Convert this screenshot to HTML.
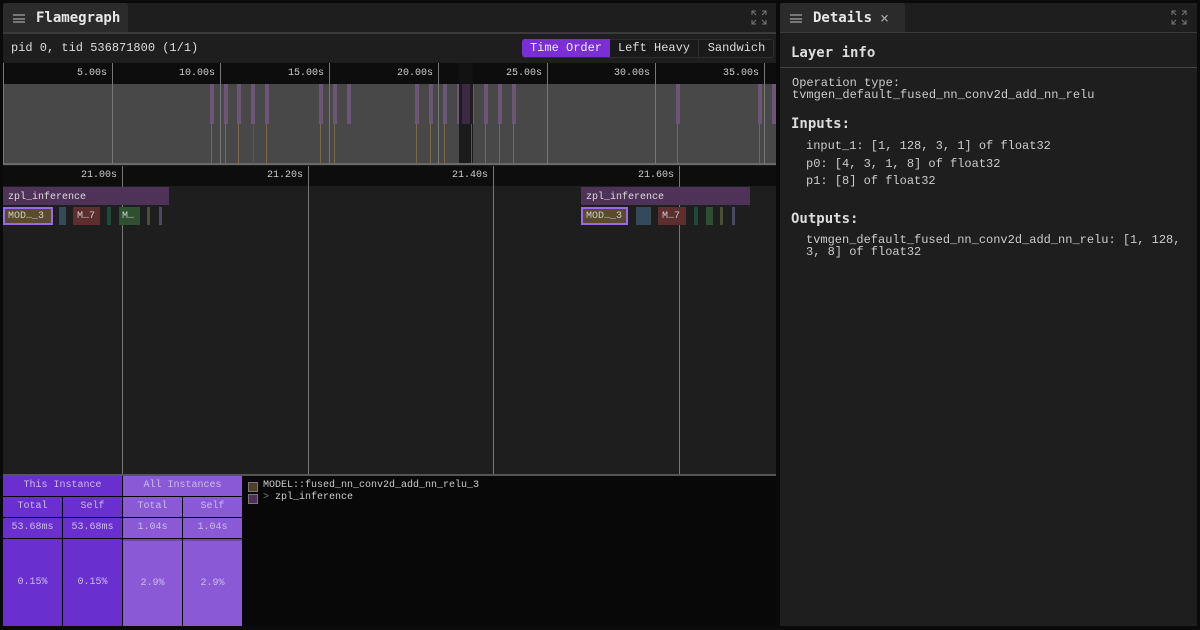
<!DOCTYPE html>
<html><head><meta charset="utf-8"><style>
*{margin:0;padding:0;box-sizing:border-box}
body{width:1200px;height:630px;background:#0a0a0a;font-family:"Liberation Mono","DejaVu Sans Mono",monospace;color:#d4d4d4;position:relative;overflow:hidden}
.a{position:absolute}
.panel{background:#1e1e1e}
.tab{background:#2b2b2b;height:30px;border-radius:3px 3px 0 0;font:bold 14px "DejaVu Sans Mono","Liberation Mono",monospace;color:#e8e8e8;line-height:30px}
.ham{position:absolute;left:10px;top:11px;width:12px;height:9px;border-top:2px solid #777;border-bottom:2px solid #777}
.ham:after{content:"";position:absolute;left:0;top:1.5px;width:12px;height:2px;background:#777}
.t{font-size:10px;color:#ccc;position:absolute}
.vl{position:absolute;width:1px;background:#777}
.st{position:absolute;width:4px;top:84px;height:40px;background:#6d5577}
.st2{position:absolute;width:1px;top:124px;height:40px;background:#7a6a4a}
.cell{position:absolute;font-size:10px;text-align:center;color:#cbbce8}
</style></head><body>
<div class="a panel" style="left:3px;top:3px;width:773px;height:623px"></div>
<div class="a tab" style="left:3px;top:3px;width:125px"><div class="ham"></div><span style="position:absolute;left:33px">Flamegraph</span></div>
<div class="a" style="left:3px;top:32px;width:773px;height:2px;background:#3a3a3a"></div>
<svg class="a" style="left:751px;top:10px" width="16" height="15" fill="none" stroke="#777" stroke-width="1"><path d="M1 5V1h4M1 1l4 4M15 5V1h-4M15 1l-4 4M1 10v4h4M1 14l4-4M15 10v4h-4M15 14l-4-4"/></svg>
<div class="a" style="left:11px;top:41px;font-size:12px;color:#ddd">pid 0, tid 536871800 (1/1)</div>
<div class="a" style="left:522px;top:39px;width:252px;height:19px;border:1px solid #2e2e2e;background:#1a1a1a;border-radius:3px"></div>
<div class="a" style="left:522px;top:39px;width:88px;height:18px;background:#7a2fd6;border-radius:3px 0 0 3px;font-size:12px;color:#eee;text-align:center;line-height:18px">Time Order</div>
<div class="a" style="left:610px;top:39px;width:89px;height:18px;font-size:12px;color:#ddd;text-align:center;line-height:18px;border-right:1px solid #2e2e2e">Left Heavy</div>
<div class="a" style="left:700px;top:39px;width:73px;height:18px;font-size:12px;color:#ddd;text-align:center;line-height:18px">Sandwich</div>
<div class="a" style="left:3px;top:63px;width:773px;height:21px;background:#0d0d0d"></div>
<div class="a" style="left:4px;top:84px;width:772px;height:80px;background:#484848"></div>
<div class="a" style="left:3px;top:163px;width:773px;height:2px;background:#6a6a6a"></div>
<div class="vl" style="left:3px;top:63px;height:101px"></div>
<div class="vl" style="left:112px;top:63px;height:101px"></div>
<div class="vl" style="left:220px;top:63px;height:101px"></div>
<div class="vl" style="left:329px;top:63px;height:101px"></div>
<div class="vl" style="left:438px;top:63px;height:101px"></div>
<div class="vl" style="left:547px;top:63px;height:101px"></div>
<div class="vl" style="left:655px;top:63px;height:101px"></div>
<div class="vl" style="left:764px;top:63px;height:101px"></div>
<div class="t" style="left:77px;top:68px">5.00s</div>
<div class="t" style="left:179px;top:68px">10.00s</div>
<div class="t" style="left:288px;top:68px">15.00s</div>
<div class="t" style="left:397px;top:68px">20.00s</div>
<div class="t" style="left:506px;top:68px">25.00s</div>
<div class="t" style="left:614px;top:68px">30.00s</div>
<div class="t" style="left:723px;top:68px">35.00s</div>
<div class="st" style="left:210px"></div><div class="st" style="left:224px"></div><div class="st" style="left:237px"></div><div class="st" style="left:251px"></div><div class="st" style="left:265px"></div><div class="st" style="left:319px"></div><div class="st" style="left:333px"></div><div class="st" style="left:347px"></div><div class="st" style="left:415px"></div><div class="st" style="left:429px"></div><div class="st" style="left:443px"></div><div class="st" style="left:457px"></div><div class="st" style="left:470px"></div><div class="st" style="left:484px"></div><div class="st" style="left:498px"></div><div class="st" style="left:512px"></div><div class="st" style="left:676px"></div><div class="st" style="left:758px"></div><div class="st" style="left:772px"></div>
<div class="st2" style="left:211px"></div><div class="st2" style="left:225px"></div><div class="st2" style="left:238px"></div><div class="st2" style="left:253px;background:#556"></div><div class="st2" style="left:266px"></div><div class="st2" style="left:320px"></div><div class="st2" style="left:334px"></div><div class="st2" style="left:416px"></div><div class="st2" style="left:430px"></div><div class="st2" style="left:444px"></div><div class="st2" style="left:485px"></div><div class="st2" style="left:499px"></div><div class="st2" style="left:513px"></div><div class="st2" style="left:677px"></div><div class="st2" style="left:759px"></div>
<div class="a" style="left:459px;top:63px;width:14px;height:100px;background:rgba(20,20,20,0.85)"></div>
<div class="a" style="left:462px;top:84px;width:8px;height:40px;background:#3a2a44"></div>
<div class="a" style="left:471px;top:124px;width:1px;height:39px;background:#a04020"></div>
<div class="a" style="left:3px;top:166px;width:773px;height:20px;background:#0d0d0d"></div>
<div class="t" style="left:81px;top:170px">21.00s</div>
<div class="t" style="left:267px;top:170px">21.20s</div>
<div class="t" style="left:452px;top:170px">21.40s</div>
<div class="t" style="left:638px;top:170px">21.60s</div>
<div class="vl" style="left:122px;top:166px;height:308px"></div>
<div class="vl" style="left:308px;top:166px;height:308px"></div>
<div class="vl" style="left:493px;top:166px;height:308px"></div>
<div class="vl" style="left:679px;top:166px;height:308px"></div>
<div class="a" style="left:3px;top:187px;width:166px;height:18px;background:#4f3258;font-size:10px;color:#ddd;line-height:21px;padding-left:5px">zpl_inference</div>
<div class="a" style="left:3px;top:207px;width:50px;height:18px;background:#5a4a30;border:2px solid #9a6ae6;font-size:10px;color:#ccc;line-height:16px;padding-left:3px">MOD…_3</div>
<div class="a" style="left:59px;top:207px;width:7px;height:18px;background:#34495a"></div>
<div class="a" style="left:73px;top:207px;width:27px;height:18px;background:#5c2e2e;font-size:10px;color:#ccc;line-height:20px;padding-left:4px">M…7</div>
<div class="a" style="left:107px;top:207px;width:4px;height:18px;background:#1f4a3a"></div>
<div class="a" style="left:119px;top:207px;width:21px;height:18px;background:#2f5030;font-size:10px;color:#ccc;line-height:20px;padding-left:3px">M…</div>
<div class="a" style="left:147px;top:207px;width:3px;height:18px;background:#4a5030"></div>
<div class="a" style="left:159px;top:207px;width:3px;height:18px;background:#4a4a66"></div>
<div class="a" style="left:581px;top:187px;width:169px;height:18px;background:#4f3258;font-size:10px;color:#ddd;line-height:21px;padding-left:5px">zpl_inference</div>
<div class="a" style="left:581px;top:207px;width:47px;height:18px;background:#5a4a30;border:2px solid #9a6ae6;font-size:10px;color:#ccc;line-height:16px;padding-left:3px">MOD…_3</div>
<div class="a" style="left:636px;top:207px;width:15px;height:18px;background:#34495a"></div>
<div class="a" style="left:658px;top:207px;width:28px;height:18px;background:#5c2e2e;font-size:10px;color:#ccc;line-height:20px;padding-left:4px">M…7</div>
<div class="a" style="left:694px;top:207px;width:4px;height:18px;background:#1f4a3a"></div>
<div class="a" style="left:706px;top:207px;width:7px;height:18px;background:#2f5030"></div>
<div class="a" style="left:720px;top:207px;width:3px;height:18px;background:#4a5030"></div>
<div class="a" style="left:732px;top:207px;width:3px;height:18px;background:#4a4a66"></div>
<div class="a" style="left:3px;top:474px;width:773px;height:2px;background:#555"></div>
<div class="a" style="left:3px;top:476px;width:773px;height:150px;background:#080808"></div>
<div class="a" style="left:3px;top:476px;width:239px;height:150px;background:#000"></div>
<div class="cell" style="left:3px;top:476px;width:119px;height:20px;line-height:20px;background:#6a2fcf">This Instance</div>
<div class="cell" style="left:123px;top:476px;width:119px;height:20px;line-height:20px;background:#8a5ad6">All Instances</div>
<div class="cell" style="left:3px;top:497px;width:59px;height:20px;line-height:20px;background:#6a2fcf">Total</div>
<div class="cell" style="left:63px;top:497px;width:59px;height:20px;line-height:20px;background:#6a2fcf">Self</div>
<div class="cell" style="left:123px;top:497px;width:59px;height:20px;line-height:20px;background:#8a5ad6">Total</div>
<div class="cell" style="left:183px;top:497px;width:59px;height:20px;line-height:20px;background:#8a5ad6">Self</div>
<div class="cell" style="left:3px;top:518px;width:59px;height:20px;line-height:20px;background:#6a2fcf">53.68ms</div>
<div class="cell" style="left:63px;top:518px;width:59px;height:20px;line-height:20px;background:#6a2fcf">53.68ms</div>
<div class="cell" style="left:123px;top:518px;width:59px;height:20px;line-height:20px;background:#8a5ad6">1.04s</div>
<div class="cell" style="left:183px;top:518px;width:59px;height:20px;line-height:20px;background:#8a5ad6">1.04s</div>
<div class="cell" style="left:3px;top:539px;width:59px;height:87px;line-height:87px;background:#6a2fcf">0.15%</div>
<div class="cell" style="left:63px;top:539px;width:59px;height:87px;line-height:87px;background:#6a2fcf">0.15%</div>
<div class="cell" style="left:123px;top:539px;width:59px;height:87px;line-height:85px;background:#8a5ad6;border-top:2px solid #6e48a8">2.9%</div>
<div class="cell" style="left:183px;top:539px;width:59px;height:87px;line-height:85px;background:#8a5ad6;border-top:2px solid #6e48a8">2.9%</div>
<div class="a" style="left:248px;top:482px;width:10px;height:10px;background:#4c3f2c;border:1px solid #777"></div>
<div class="a" style="left:263px;top:480px;font-size:10px;color:#ccc">MODEL::fused_nn_conv2d_add_nn_relu_3</div>
<div class="a" style="left:248px;top:494px;width:10px;height:10px;background:#4c3158;border:1px solid #777"></div>
<div class="a" style="left:263px;top:492px;font-size:10px;color:#ccc"><span style="color:#777">&gt;</span> zpl_inference</div>
<div class="a panel" style="left:780px;top:3px;width:417px;height:623px"></div>
<div class="a tab" style="left:780px;top:3px;width:125px"><div class="ham"></div><span style="position:absolute;left:33px">Details</span><span style="position:absolute;left:100px;top:0;font-weight:normal;color:#aaa;font-size:15px">×</span></div>
<div class="a" style="left:780px;top:32px;width:417px;height:1px;background:#3a3a3a"></div>
<svg class="a" style="left:1171px;top:10px" width="16" height="15" fill="none" stroke="#777" stroke-width="1"><path d="M1 5V1h4M1 1l4 4M15 5V1h-4M15 1l-4 4M1 10v4h4M1 14l4-4M15 10v4h-4M15 14l-4-4"/></svg>
<div class="a" style="left:791px;top:45px;font-size:14px;font-weight:bold;color:#ddd;font-family:'DejaVu Sans Mono',monospace">Layer info</div>
<div class="a" style="left:780px;top:67px;width:417px;height:1px;background:#444"></div>
<div class="a" style="left:792px;top:77px;font-size:12px;line-height:12px;color:#ccc">Operation type:<br>tvmgen_default_fused_nn_conv2d_add_nn_relu</div>
<div class="a" style="left:791px;top:116px;font-size:14px;font-weight:bold;color:#ddd;font-family:'DejaVu Sans Mono',monospace">Inputs:</div>
<div class="a" style="left:806px;top:138px;font-size:12px;line-height:17.5px;color:#ccc">input_1: [1, 128, 3, 1] of float32<br>p0: [4, 3, 1, 8] of float32<br>p1: [8] of float32</div>
<div class="a" style="left:791px;top:211px;font-size:14px;font-weight:bold;color:#ddd;font-family:'DejaVu Sans Mono',monospace">Outputs:</div>
<div class="a" style="left:806px;top:234px;font-size:12px;line-height:12px;color:#ccc">tvmgen_default_fused_nn_conv2d_add_nn_relu: [1, 128,<br>3, 8] of float32</div>
</body></html>
